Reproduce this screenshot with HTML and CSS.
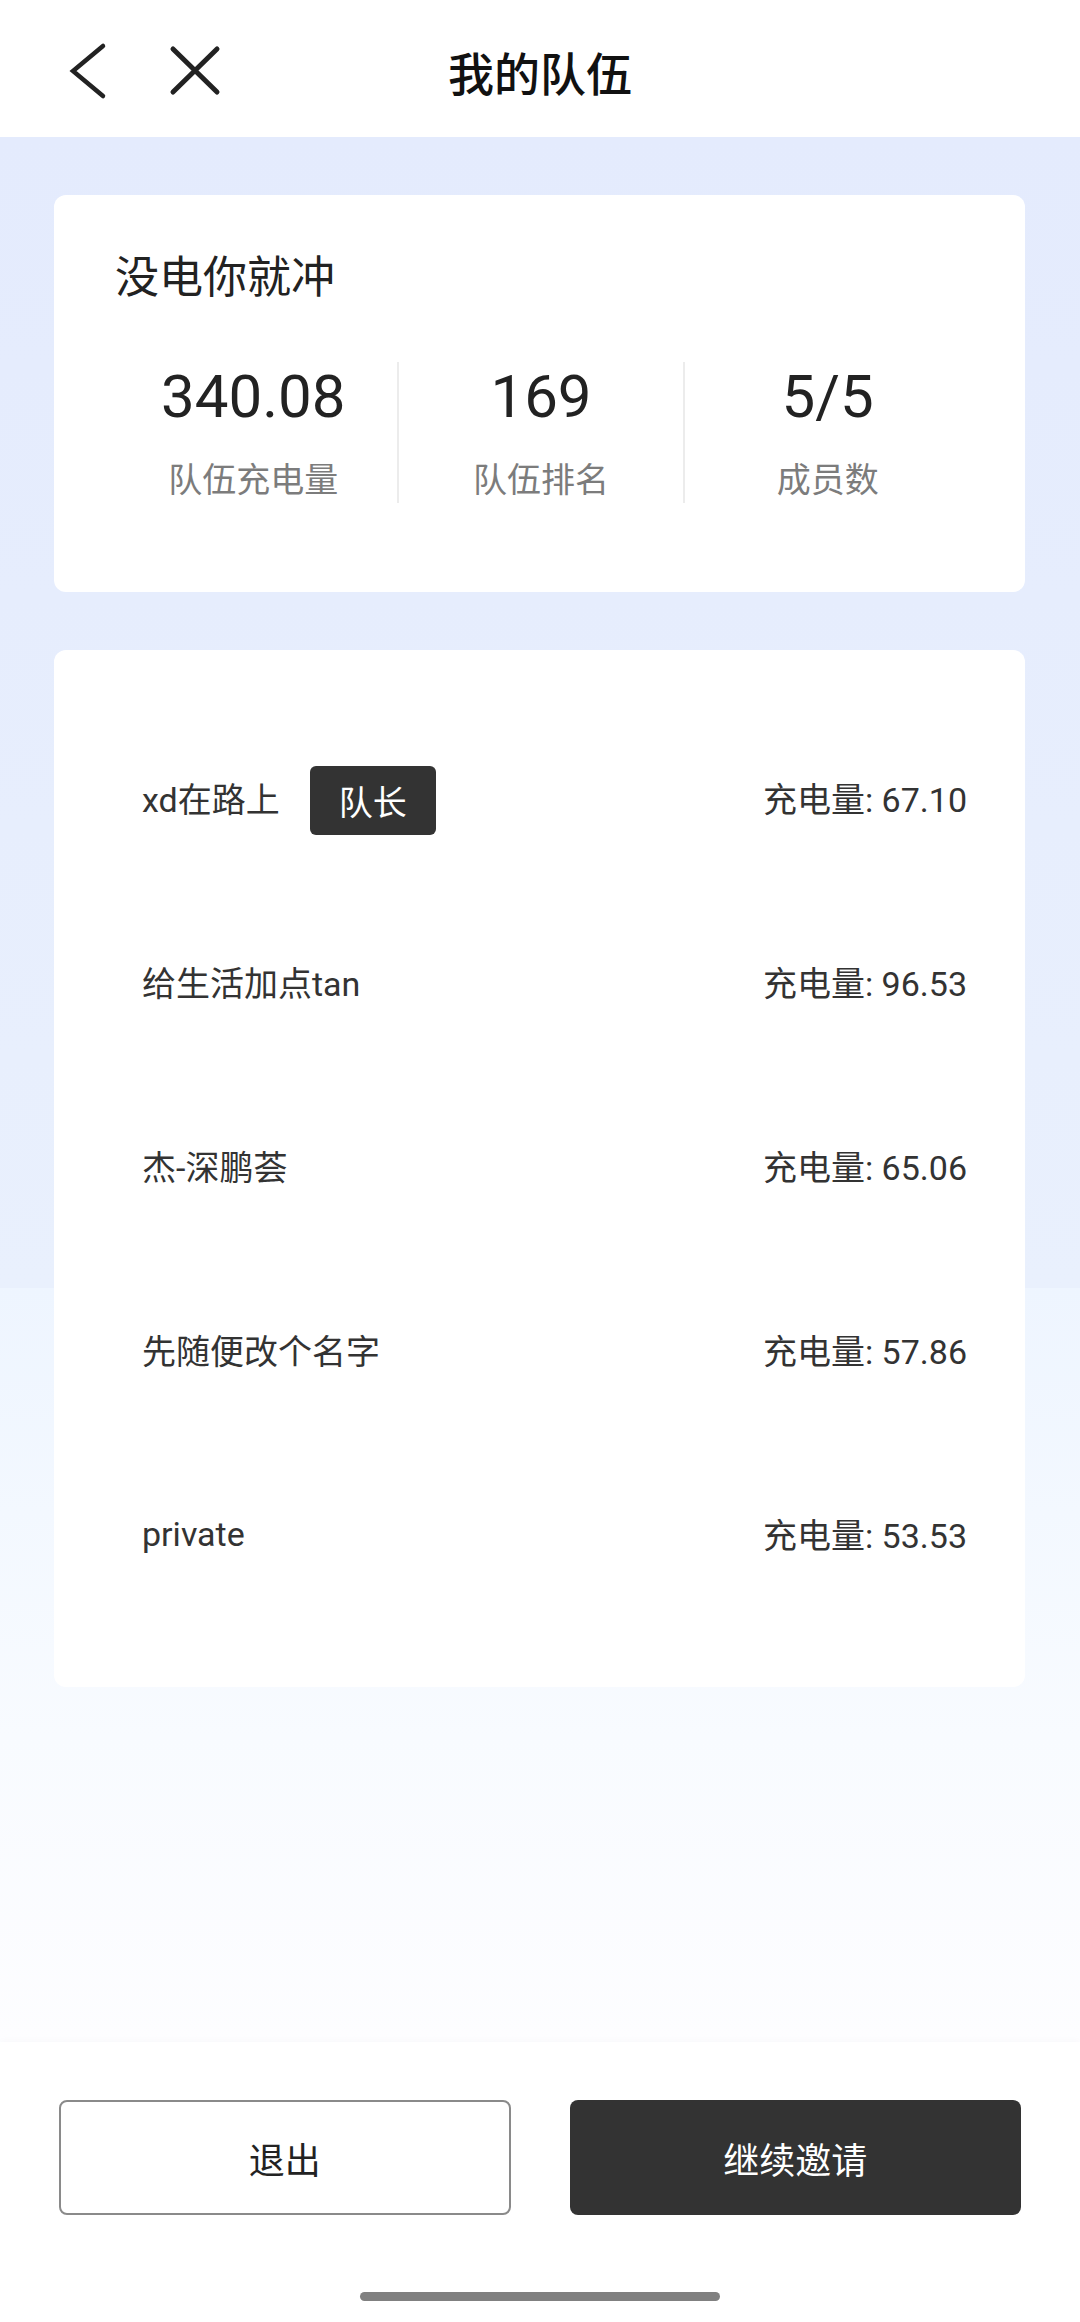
FILE: index.html
```html
<!DOCTYPE html>
<html lang="zh-CN">
<head>
    <meta charset="UTF-8">
    <meta name="viewport" content="width=device-width, initial-scale=1.0">
    <title>我的队伍</title>
    <link rel="stylesheet" href="styles.css">
</head>
<body>
    <div class="topbar">
        <div class="nav-icons">
            <svg class="icon-back" width="48" height="60" viewBox="0 0 48 60">
                <path d="M39 5 L9 30 L39 55" fill="none" stroke="#222" stroke-width="4.5" stroke-linecap="round" stroke-linejoin="miter"/>
            </svg>
            <svg class="icon-close" width="62" height="60" viewBox="0 0 62 60">
                <path d="M9 8 L53 51 M53 8 L9 51" fill="none" stroke="#222" stroke-width="5" stroke-linecap="round"/>
            </svg>
        </div>
        <div class="page-title">我的队伍</div>
        <div></div>
    </div>

    <div class="content">
        <div class="card team-card">
            <div class="team-name">没电你就冲</div>
            <div class="stats">
                <div class="stat">
                    <div class="stat-value">340.08</div>
                    <div class="stat-label">队伍充电量</div>
                </div>
                <div class="stat">
                    <div class="stat-value">169</div>
                    <div class="stat-label">队伍排名</div>
                </div>
                <div class="stat">
                    <div class="stat-value">5/5</div>
                    <div class="stat-label">成员数</div>
                </div>
            </div>
        </div>

        <div class="card member-card">
            <div class="member">
                <div class="member-name"><span class="name-text">xd在路上</span><span class="badge">队长</span></div>
                <div class="member-score">充电量: 67.10</div>
            </div>
            <div class="member">
                <div class="member-name"><span class="name-text">给生活加点tan</span></div>
                <div class="member-score">充电量: 96.53</div>
            </div>
            <div class="member">
                <div class="member-name"><span class="name-text">杰-深鹏荟</span></div>
                <div class="member-score">充电量: 65.06</div>
            </div>
            <div class="member">
                <div class="member-name"><span class="name-text">先随便改个名字</span></div>
                <div class="member-score">充电量: 57.86</div>
            </div>
            <div class="member">
                <div class="member-name"><span class="name-text">private</span></div>
                <div class="member-score">充电量: 53.53</div>
            </div>
        </div>
    </div>

    <div class="footer">
        <div class="actions">
            <button class="btn btn-quit">退出</button>
            <button class="btn btn-invite">继续邀请</button>
        </div>
        <div class="home-bar"></div>
    </div>
</body>
</html>
```

FILE: styles.css
```css
body {
    margin: 0;
    width: 1080px;
    height: 2322px;
    display: flex;
    flex-direction: column;
    font-family: Roboto, "Noto Sans CJK SC", sans-serif;
    color: #222;
    background: #fff;
    overflow: hidden;
}

/* top navigation */
.topbar {
    height: 137px;
    flex-shrink: 0;
    box-sizing: border-box;
    padding-top: 5px;
    display: grid;
    grid-template-columns: 1fr auto 1fr;
    align-items: center;
    background: #fff;
}

.nav-icons {
    display: flex;
    align-items: center;
    gap: 52px;
    padding-left: 64px;
}

.nav-icons svg {
    display: block;
}

.page-title {
    font-family: "Noto Sans CJK SC", sans-serif;
    font-size: 46px;
    font-weight: 500;
    color: #111;
    line-height: 60px;
}

/* main area with the blue wash */
.content {
    flex: 1;
    padding: 58px 55px 0 54px;
    background: linear-gradient(180deg, #e4ebfd 0, #e9f0fd 1151px, #eef5ff 1151px, #f8fbff 1600px, #fdfdff 1905px);
}

.card {
    background: #fff;
    border-radius: 12px;
}

.team-card {
    padding: 53px 55px 89px 56px;
}

.team-name {
    font-size: 44px;
    line-height: 60px;
    color: #222;
    padding-left: 5px;
}

.stats {
    margin-top: 54px;
    display: grid;
    grid-template-columns: repeat(3, 1fr);
}

.stat {
    text-align: center;
    display: flex;
    flex-direction: column;
    gap: 25px;
}

.stat + .stat {
    border-left: 2px solid #ececec;
}

.stat-value {
    font-size: 60px;
    line-height: 70px;
    color: #222;
}

.stat-label {
    font-size: 34px;
    line-height: 46px;
    color: #7c7c7c;
}

.member-card {
    margin-top: 58px;
    padding: 58px 58px 59px 88px;
}

.member {
    height: 184px;
    display: flex;
    align-items: center;
    justify-content: space-between;
    font-size: 34px;
    color: #333;
}

.member-name {
    display: flex;
    align-items: center;
    gap: 30px;
}

.name-text,
.member-score {
    margin-bottom: 5px;
}

.badge {
    width: 126px;
    height: 69px;
    border-radius: 6px;
    background: #333;
    color: #fff;
    font-size: 34px;
    display: flex;
    align-items: center;
    justify-content: center;
}

/* bottom action bar */
.footer {
    height: 280px;
    flex-shrink: 0;
    box-sizing: border-box;
    padding-top: 58px;
    background: #fff;
    box-shadow: 0 -2px 6px rgba(0, 0, 0, 0.02);
    display: flex;
    flex-direction: column;
    align-items: center;
}

.actions {
    width: 100%;
    box-sizing: border-box;
    padding: 0 59px;
    display: grid;
    grid-template-columns: 1fr 1fr;
    gap: 59px;
}

.btn {
    height: 115px;
    border-radius: 8px;
    font-family: "Noto Sans CJK SC", sans-serif;
    font-size: 36px;
}

.btn-quit {
    background: #fff;
    border: 2px solid #8a8a8a;
    color: #222;
}

.btn-invite {
    background: #333;
    border: none;
    color: #fff;
}

.home-bar {
    margin-top: 77px;
    width: 360px;
    height: 9px;
    border-radius: 5px;
    background: #808080;
}
```
